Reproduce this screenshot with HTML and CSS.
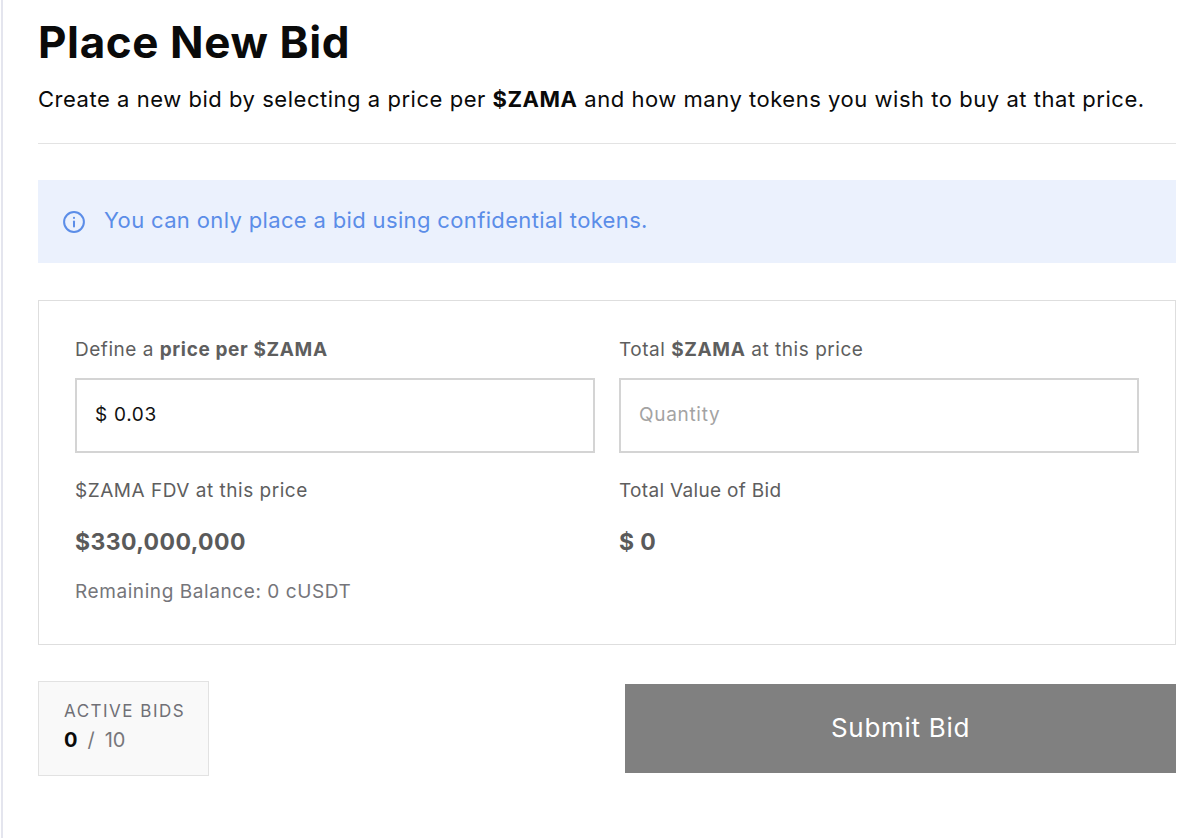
FILE: index.html
```html
<!DOCTYPE html>
<html lang="en">
<head>
  <meta charset="UTF-8" />
  <meta name="viewport" content="width=device-width, initial-scale=1.0"/>
  <title>Place New Bid</title>
  <link rel="stylesheet" href="styles.css">
</head>
<body>
  <main class="panel">
    <h1>Place New Bid</h1>
    <p class="intro">Create a new bid by selecting a price per <strong>$ZAMA</strong> and how many tokens you wish to buy at that price.</p>
    <hr class="divider">

    <div class="notice">
      <svg class="notice-icon" viewBox="0 0 24 24" fill="none" stroke="currentColor" stroke-width="2.2" stroke-linecap="round">
        <circle cx="12" cy="12" r="10.8"/>
        <line x1="12" y1="11.5" x2="12" y2="17"/>
        <line x1="12" y1="7.4" x2="12" y2="7.6"/>
      </svg>
      <span>You can only place a bid using confidential tokens.</span>
    </div>

    <form class="bid-form">
      <div class="field">
        <label class="label" for="price">Define a <strong>price per $ZAMA</strong></label>
        <input class="input" id="price" type="text" value="$ 0.03">
        <div class="label stat-label">$ZAMA FDV at this price</div>
        <div class="stat-value">$330,000,000</div>
        <div class="balance">Remaining Balance: 0 cUSDT</div>
      </div>
      <div class="field">
        <label class="label" for="quantity">Total <strong>$ZAMA</strong> at this price</label>
        <input class="input" id="quantity" type="text" placeholder="Quantity">
        <div class="label stat-label stat-label-tight">Total Value of Bid</div>
        <div class="stat-value">$ 0</div>
      </div>
    </form>

    <div class="actions">
      <div class="active-bids">
        <div class="active-title">ACTIVE BIDS</div>
        <div class="active-count"><b>0</b><span class="slash">/</span><span>10</span></div>
      </div>
      <button class="submit" type="button">Submit Bid</button>
    </div>
  </main>
</body>
</html>
```

FILE: styles.css
```css
html, body {
  height: 100%;
}

body {
  margin: 0;
  background-color: #fff;
  font-family: Inter, 'Liberation Sans', sans-serif;
  color: #0a0a0a;
}

.panel {
  box-sizing: border-box;
  min-height: 100%;
  margin-left: 1px;
  border-left: 2px solid #e4e5ee;
  padding: 15px 24px 0 35px;
}

h1 {
  margin: 0;
  font-size: 44px;
  line-height: 54px;
  font-weight: 700;
  letter-spacing: 0.6px;
}

.intro {
  margin: 15px 0 0;
  font-size: 22px;
  line-height: 30px;
  letter-spacing: 0.53px;
}

.intro strong {
  font-weight: 700;
}

.divider {
  margin: 29px 0 0;
  border: 0;
  border-top: 1px solid #e3e3e3;
}

.notice {
  display: flex;
  align-items: center;
  gap: 19px;
  height: 83px;
  margin-top: 36px;
  padding-left: 25px;
  background-color: #ebf1fd;
  color: #5b8de8;
  font-size: 22px;
  line-height: 26px;
  letter-spacing: 0.35px;
}

.notice span {
  margin-top: -4px;
}

.notice-icon {
  width: 22px;
  height: 22px;
}

.bid-form {
  display: grid;
  grid-template-columns: 1fr 1fr;
  gap: 24px;
  height: 345px;
  box-sizing: border-box;
  margin-top: 37px;
  padding: 36px 36px 0;
  border: 1px solid #dedede;
}

.label {
  display: block;
  font-size: 19px;
  line-height: 26px;
  letter-spacing: 0.52px;
  color: #5e5e5e;
}

.label strong {
  font-weight: 700;
  letter-spacing: 0.62px;
}

.input {
  display: block;
  box-sizing: border-box;
  width: 100%;
  height: 75px;
  margin-top: 15px;
  padding: 0 18px 3px;
  border: 2px solid #d4d4d4;
  border-radius: 0;
  outline: none;
  background: #fff;
  font-family: inherit;
  font-size: 19px;
  letter-spacing: 0.7px;
  color: #111;
}

.input::placeholder {
  color: #a3a3a3;
  opacity: 1;
}

.stat-label {
  margin-top: 25px;
}

.stat-label-tight {
  letter-spacing: 0.32px;
}

.stat-value {
  margin-top: 23px;
  font-size: 23px;
  line-height: 30px;
  font-weight: 700;
  letter-spacing: 0.4px;
  color: #5a5a5a;
}

.balance {
  margin-top: 22px;
  font-size: 19px;
  line-height: 26px;
  letter-spacing: 0.58px;
  color: #75757a;
}

.actions {
  display: flex;
  justify-content: space-between;
  align-items: center;
  margin-top: 36px;
}

.active-bids {
  box-sizing: border-box;
  width: 171px;
  height: 95px;
  padding: 18px 25px;
  border: 1px solid #e2e2e2;
  background-color: #f9f9f9;
}

.active-title {
  font-size: 17px;
  line-height: 22px;
  letter-spacing: 1.5px;
  white-space: nowrap;
  color: #707076;
}

.active-count {
  display: flex;
  margin-top: 5px;
  font-size: 20px;
  line-height: 26px;
  color: #77777b;
}

.active-count b {
  color: #0a0a0a;
}

.slash {
  margin: 0 10px;
}

.submit {
  width: 551px;
  height: 89px;
  padding: 0 0 3px;
  border: 0;
  border-radius: 0;
  background-color: #808080;
  color: #fff;
  font-family: inherit;
  font-size: 26px;
  letter-spacing: 0.7px;
}
```
